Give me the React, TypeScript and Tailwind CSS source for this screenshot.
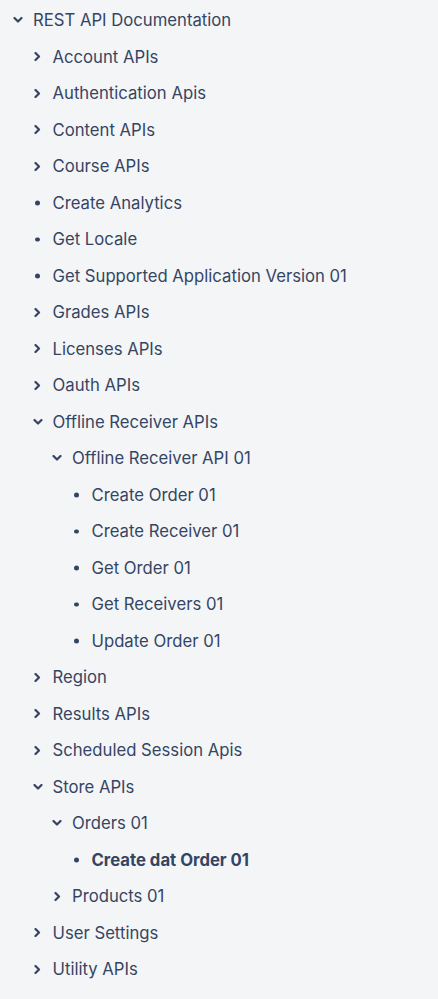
import React from "react";

type Node = { label: string; depth: number; kind: "open" | "closed" | "leaf"; bold?: boolean };

const items: Node[] = [
  { label: "REST API Documentation", depth: 0, kind: "open" },
  { label: "Account APIs", depth: 1, kind: "closed" },
  { label: "Authentication Apis", depth: 1, kind: "closed" },
  { label: "Content APIs", depth: 1, kind: "closed" },
  { label: "Course APIs", depth: 1, kind: "closed" },
  { label: "Create Analytics", depth: 1, kind: "leaf" },
  { label: "Get Locale", depth: 1, kind: "leaf" },
  { label: "Get Supported Application Version 01", depth: 1, kind: "leaf" },
  { label: "Grades APIs", depth: 1, kind: "closed" },
  { label: "Licenses APIs", depth: 1, kind: "closed" },
  { label: "Oauth APIs", depth: 1, kind: "closed" },
  { label: "Offline Receiver APIs", depth: 1, kind: "open" },
  { label: "Offline Receiver API 01", depth: 2, kind: "open" },
  { label: "Create Order 01", depth: 3, kind: "leaf" },
  { label: "Create Receiver 01", depth: 3, kind: "leaf" },
  { label: "Get Order 01", depth: 3, kind: "leaf" },
  { label: "Get Receivers 01", depth: 3, kind: "leaf" },
  { label: "Update Order 01", depth: 3, kind: "leaf" },
  { label: "Region", depth: 1, kind: "closed" },
  { label: "Results APIs", depth: 1, kind: "closed" },
  { label: "Scheduled Session Apis", depth: 1, kind: "closed" },
  { label: "Store APIs", depth: 1, kind: "open" },
  { label: "Orders 01", depth: 2, kind: "open" },
  { label: "Create dat Order 01", depth: 3, kind: "leaf", bold: true },
  { label: "Products 01", depth: 2, kind: "closed" },
  { label: "User Settings", depth: 1, kind: "closed" },
  { label: "Utility APIs", depth: 1, kind: "closed" },
];

const pads = ["pl-[10px]", "pl-[29.5px]", "pl-[49px]", "pl-[68.5px]"];

function Icon({ kind }: { kind: Node["kind"] }) {
  if (kind === "leaf") {
    return <span className="block w-[4.5px] h-[4.5px] rounded-full bg-[#344563]" />;
  }
  if (kind === "open") {
    return (
      <svg width="10" height="7" viewBox="0 0 10 7" fill="none">
        <path d="M1.5 1.5 L5 5 L8.5 1.5" stroke="#344563" strokeWidth="2.2" strokeLinecap="round" strokeLinejoin="round" />
      </svg>
    );
  }
  return (
    <svg width="7" height="10" viewBox="0 0 7 10" fill="none">
      <path d="M1.5 1.5 L5 5 L1.5 8.5" stroke="#344563" strokeWidth="2.2" strokeLinecap="round" strokeLinejoin="round" />
    </svg>
  );
}

export default function App() {
  return (
    <div
      className="w-[438px] min-h-[999px] bg-[#f4f5f7] pt-[2.5px] text-[#344563] text-[16.7px]"
      style={{ fontFamily: "Inter, 'Noto Sans', sans-serif" }}
    >
      {items.map((n, i) => (
        <div key={i} className={`flex items-center h-[36.5px] ${pads[n.depth]}`}>
          <span className="w-[16px] h-[16px] flex items-center justify-center shrink-0 -translate-y-[0.5px]">
            <Icon kind={n.kind} />
          </span>
          <span className={`ml-[7px] whitespace-nowrap ${n.bold ? "font-bold" : "font-normal"}`}>
            {n.label}
          </span>
        </div>
      ))}
    </div>
  );
}
